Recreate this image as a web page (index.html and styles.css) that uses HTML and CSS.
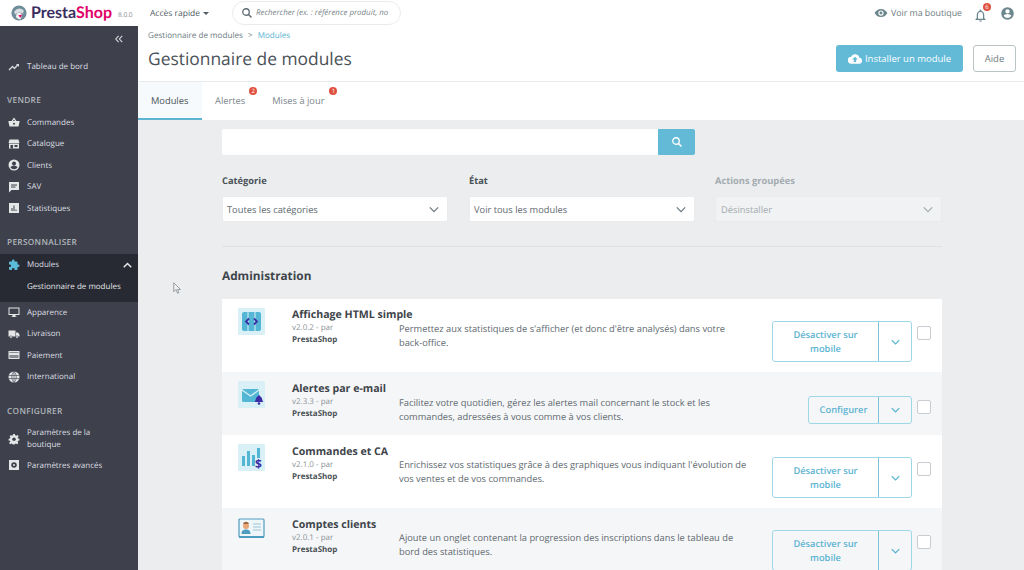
FILE: index.html
```html
<!DOCTYPE html>
<html lang="fr">
<head>
    <meta charset="UTF-8">
    <meta name="viewport" content="width=device-width, initial-scale=1.0">
    <title>Gestionnaire de modules</title>
    <link rel="stylesheet" href="styles.css">
</head>
<body>
    <header class="topbar">
        <div class="logo">
            <svg class="logo-mark" viewBox="0 0 20 20" width="16" height="16">
                <circle cx="10" cy="10" r="9.500" fill="#6f8c9b"/>
                <path d="M4 8 Q10 1 16 7 L15 11 Q10 7 5 12 Z" fill="#d9dfe3"/>
                <path d="M7 11 Q11 8 14 12 L12 18 Q8 18 6 15 Z" fill="#f4f1ec"/>
                <path d="M9 13 L14 12 L12 16 Z" fill="#df0067"/>
            </svg>
            <span class="logo-text"><span class="logo-presta">Presta</span><span class="logo-shop">Shop</span></span>
            <span class="version">8.0.0</span>
        </div>
        <div class="quick">Accès rapide <span class="caret"></span></div>
        <div class="top-search">
            <svg viewBox="0 0 24 24" width="12" height="12"><circle cx="10" cy="10" r="6.500" fill="none" stroke="#5f6b72" stroke-width="2.600"/><path d="M15 15l6 6" stroke="#5f6b72" stroke-width="2.800"/></svg>
            <span>Rechercher (ex. : référence produit, no</span>
        </div>
        <div class="top-right">
            <svg viewBox="0 0 24 24" width="14" height="14"><path d="M12 5C7 5 3 8 1 12c2 4 6 7 11 7s9-3 11-7c-2-4-6-7-11-7zm0 11.500a4.500 4.500 0 1 1 0-9 4.500 4.500 0 0 1 0 9zm0-7a2.500 2.500 0 1 0 0 5 2.500 2.500 0 0 0 0-5z" fill="#6c868e"/></svg>
            <span class="shop-link">Voir ma boutique</span>
            <div class="bell">
                <svg viewBox="0 0 24 24" width="15" height="15"><path d="M12 22a2 2 0 0 0 2-2h-4a2 2 0 0 0 2 2zm6-6v-5c0-3-1.600-5.600-4.500-6.300V4a1.500 1.500 0 0 0-3 0v.7C7.600 5.400 6 8 6 11v5l-2 2v1h16v-1zm-2 1H8v-6c0-2.500 1.500-4.500 4-4.500s4 2 4 4.500z" fill="#6c868e"/></svg>
                <span class="badge bell-badge">6</span>
            </div>
            <svg viewBox="0 0 24 24" width="15" height="15"><path d="M12 2a10 10 0 1 0 0 20 10 10 0 0 0 0-20zm0 3a3.500 3.500 0 1 1 0 7 3.500 3.500 0 0 1 0-7zm0 14.200a7.500 7.500 0 0 1-6-3.200c0-2 4-3.100 6-3.100s6 1.100 6 3.100a7.500 7.500 0 0 1-6 3.200z" fill="#6c868e"/></svg>
        </div>
    </header>

    <div class="layout">
        <nav class="sidebar">
            <div class="collapse">
                <svg viewBox="0 0 12 10" width="10" height="8"><path d="M5.500 1L2 5l3.500 4M10 1L6.500 5l3.500 4" fill="none" stroke="#d5d8dc" stroke-width="1.400"/></svg>
            </div>
            <a class="nav-item dash">
                <svg class="nav-icon" viewBox="0 0 24 24"><path d="M2 18l7-7 4 4 7-8" fill="none" stroke="#d5d8dc" stroke-width="2.600"/><path d="M16 6h6v6z" fill="#d5d8dc"/></svg>
                Tableau de bord
            </a>

            <div class="nav-title">VENDRE</div>
            <a class="nav-item">
                <svg class="nav-icon" viewBox="0 0 24 24"><path d="M1 10h22v2l-2 9H3l-2-9zM7 10l5-7 5 7h-3l-2-3-2 3z" fill="#e4e6e8"/><circle cx="12" cy="15.500" r="2" fill="#3e404b"/></svg>
                Commandes
            </a>
            <a class="nav-item">
                <svg class="nav-icon" viewBox="0 0 24 24"><path d="M3 3h18l2 7H1zM2 11h20v10H2z" fill="#e4e6e8"/><path d="M5 14h5v7H5zM13 14h6v4h-6z" fill="#3e404b"/></svg>
                Catalogue
            </a>
            <a class="nav-item">
                <svg class="nav-icon" viewBox="0 0 24 24"><path d="M12 1a11 11 0 1 0 0 22 11 11 0 0 0 0-22zm0 4a4 4 0 1 1 0 8 4 4 0 0 1 0-8zm0 15.500a8.500 8.500 0 0 1-7-3.500c0-2.200 4.500-3.400 7-3.400s7 1.200 7 3.400a8.500 8.500 0 0 1-7 3.500z" fill="#e4e6e8"/></svg>
                Clients
            </a>
            <a class="nav-item">
                <svg class="nav-icon" viewBox="0 0 24 24"><path d="M2 2h20v16H7l-5 5z" fill="#e4e6e8"/><path d="M6 7h12v2H6zM6 11h9v2H6z" fill="#3e404b"/></svg>
                SAV
            </a>
            <a class="nav-item">
                <svg class="nav-icon" viewBox="0 0 24 24"><path d="M2 2h20v20H2z" fill="#e4e6e8"/><path d="M7 12h2v6H7zM11 7h2v11h-2zM15 15h2v3h-2z" fill="#3e404b"/></svg>
                Statistiques
            </a>

            <div class="nav-title">PERSONNALISER</div>
            <div class="nav-group">
                <a class="nav-item current">
                    <svg class="nav-icon" viewBox="0 0 24 24"><path d="M20.500 11H19V7a2 2 0 0 0-2-2h-4V3.500a2.500 2.500 0 0 0-5 0V5H4a2 2 0 0 0-2 2v3.800h1.500a2.700 2.700 0 0 1 0 5.400H2V20a2 2 0 0 0 2 2h3.800v-1.500a2.700 2.700 0 0 1 5.400 0V22H17a2 2 0 0 0 2-2v-4h1.500a2.500 2.500 0 0 0 0-5z" fill="#5cbbd8"/></svg>
                    Modules
                    <svg class="nav-up" viewBox="0 0 12 8" width="9" height="6"><path d="M1 7l5-5 5 5" fill="none" stroke="#e4e6e8" stroke-width="2"/></svg>
                </a>
                <a class="nav-item sub">Gestionnaire de modules</a>
            </div>
            <a class="nav-item">
                <svg class="nav-icon" viewBox="0 0 24 24"><path d="M1 3h22v15h-8v3h2v1H7v-1h2v-3H1zm2 2v11h18V5z" fill="#e4e6e8"/></svg>
                Apparence
            </a>
            <a class="nav-item">
                <svg class="nav-icon" viewBox="0 0 24 24"><path d="M1 5h14v12H1zM16 9h4l3 4v4h-7z" fill="#e4e6e8"/><circle cx="6" cy="18" r="2.500" fill="#e4e6e8" stroke="#3e404b"/><circle cx="18" cy="18" r="2.500" fill="#e4e6e8" stroke="#3e404b"/></svg>
                Livraison
            </a>
            <a class="nav-item">
                <svg class="nav-icon" viewBox="0 0 24 24"><path d="M1 4h22v16H1z" fill="#e4e6e8"/><path d="M3 6h18v2H3zM3 12h18v6H3z" fill="#3e404b" opacity=".55"/></svg>
                Paiement
            </a>
            <a class="nav-item">
                <svg class="nav-icon" viewBox="0 0 24 24"><circle cx="12" cy="12" r="11" fill="#e4e6e8"/><path d="M1 9h22M1 15h22M12 1v22M12 1c-6 6-6 16 0 22M12 1c6 6 6 16 0 22" fill="none" stroke="#3e404b" stroke-width="1.200"/></svg>
                International
            </a>

            <div class="nav-title">CONFIGURER</div>
            <a class="nav-item tall">
                <svg class="nav-icon" viewBox="0 0 24 24"><path d="M10 1h4l.6 3 2.400 1 2.600-1.700 2.800 2.800L20 8.700l1 2.400 3 .5v4l-3 .5-1 2.300 1.700 2.600-2.800 2.800-2.600-1.700-2.400 1-.6 1.500h-4l-.6-1.500-2.400-1-2.600 1.700-2.800-2.800L4 18.400l-1-2.300-3-.5v-4l3-.5 1-2.400-1.700-2.600 2.800-2.800L7 5l2.400-1z" transform="translate(1.200 1) scale(.9)" fill="#e4e6e8"/><circle cx="12" cy="12.500" r="3.500" fill="#3e404b"/></svg>
                <span>Paramètres de la<br>boutique</span>
            </a>
            <a class="nav-item">
                <svg class="nav-icon" viewBox="0 0 24 24"><path d="M2 2h20v20H2z" fill="#e4e6e8"/><circle cx="12" cy="12" r="5.500" fill="#3e404b"/><circle cx="12" cy="12" r="2" fill="#e4e6e8"/></svg>
                Paramètres avancés
            </a>
        </nav>

        <main class="main">
            <div class="page-head">
                <div>
                    <div class="breadcrumb">Gestionnaire de modules <span class="sep">&gt;</span> <span class="crumb-active">Modules</span></div>
                    <h1>Gestionnaire de modules</h1>
                </div>
                <div class="head-actions">
                    <button class="btn-install">
                        <svg viewBox="0 0 24 24" width="14" height="14"><path d="M19.400 10A7.500 7.500 0 0 0 5.400 8 6 6 0 0 0 6 20h13a5 5 0 0 0 .4-10zM14 13v4h-4v-4H7l5-5 5 5z" fill="#fff"/></svg>
                        Installer un module
                    </button>
                    <button class="btn-help">Aide</button>
                </div>
            </div>

            <div class="tabs">
                <a class="tab active">Modules</a>
                <a class="tab">Alertes<span class="badge">2</span></a>
                <a class="tab">Mises à jour<span class="badge">1</span></a>
            </div>

            <div class="content">
                <div class="search">
                    <div class="search-input"></div>
                    <div class="search-btn">
                        <svg viewBox="0 0 24 24" width="12" height="12"><circle cx="10" cy="10" r="6.500" fill="none" stroke="#fff" stroke-width="2.600"/><path d="M15 15l6 6" stroke="#fff" stroke-width="3"/></svg>
                    </div>
                </div>

                <div class="filters">
                    <div class="filter">
                        <label>Catégorie</label>
                        <div class="select">Toutes les catégories
                            <svg viewBox="0 0 12 8" width="10" height="7"><path d="M1 1.500l5 5 5-5" fill="none" stroke="#6c7a80" stroke-width="1.500"/></svg>
                        </div>
                    </div>
                    <div class="filter">
                        <label>État</label>
                        <div class="select">Voir tous les modules
                            <svg viewBox="0 0 12 8" width="10" height="7"><path d="M1 1.500l5 5 5-5" fill="none" stroke="#6c7a80" stroke-width="1.500"/></svg>
                        </div>
                    </div>
                    <div class="filter disabled">
                        <label>Actions groupées</label>
                        <div class="select">Désinstaller
                            <svg viewBox="0 0 12 8" width="10" height="7"><path d="M1 1.500l5 5 5-5" fill="none" stroke="#a5adb1" stroke-width="1.500"/></svg>
                        </div>
                    </div>
                </div>

                <h2>Administration</h2>

                <div class="modules">
                    <div class="module">
                        <div class="mod-icon">
                            <svg viewBox="0 0 27 27" width="27" height="27"><rect width="27" height="27" rx="1" fill="#d8f0f6"/><rect x="4" y="4" width="19" height="19" rx="2" fill="#52b6d4"/><path d="M10 4v19M17 4v19" stroke="#d8f0f6"/><path d="M11 10.500L8 13.500l3 3M16 10.500l3 3-3 3" fill="none" stroke="#3b2ea5" stroke-width="1.800"/></svg>
                        </div>
                        <div class="mod-info">
                            <div class="mod-name">Affichage HTML simple</div>
                            <div class="mod-version">v2.0.2 - par</div>
                            <div class="mod-author">PrestaShop</div>
                        </div>
                        <p class="mod-desc">Permettez aux statistiques de s'afficher (et donc d'être analysés) dans votre back-office.</p>
                        <div class="mod-actions">
                            <div class="btn-group">
                                <span class="btn-main wide">Désactiver sur mobile</span>
                                <span class="btn-drop"><svg viewBox="0 0 12 8" width="9" height="6"><path d="M1 1.500l5 5 5-5" fill="none" stroke="#5cb4d2" stroke-width="1.800"/></svg></span>
                            </div>
                            <span class="check"></span>
                        </div>
                    </div>
                    <div class="module alt short">
                        <div class="mod-icon">
                            <svg viewBox="0 0 27 27" width="27" height="27"><rect width="27" height="27" rx="1" fill="#d8f0f6"/><rect x="4" y="8" width="17" height="13" rx="1.500" fill="#52b6d4"/><path d="M4 9l8.500 6L21 9" fill="none" stroke="#d8f0f6" stroke-width="1.300"/><path d="M16.500 21c1.500-1 1-5 3.500-5.700 0-1.300 2-1.300 2 0 2.500.700 2 4.700 3.500 5.700z" fill="#3b2ea5"/><circle cx="21" cy="22.500" r="1.300" fill="#3b2ea5"/></svg>
                        </div>
                        <div class="mod-info">
                            <div class="mod-name">Alertes par e-mail</div>
                            <div class="mod-version">v2.3.3 - par</div>
                            <div class="mod-author">PrestaShop</div>
                        </div>
                        <p class="mod-desc">Facilitez votre quotidien, gérez les alertes mail concernant le stock et les commandes, adressées à vous comme à vos clients.</p>
                        <div class="mod-actions">
                            <div class="btn-group">
                                <span class="btn-main">Configurer</span>
                                <span class="btn-drop"><svg viewBox="0 0 12 8" width="9" height="6"><path d="M1 1.500l5 5 5-5" fill="none" stroke="#5cb4d2" stroke-width="1.800"/></svg></span>
                            </div>
                            <span class="check"></span>
                        </div>
                    </div>
                    <div class="module">
                        <div class="mod-icon">
                            <svg viewBox="0 0 27 27" width="27" height="27" overflow="visible"><rect width="27" height="27" rx="1" fill="#d8f0f6"/><path d="M4 12h3v10H4zM9 7h3v15H9zM14 11h3v11h-3zM19 4h3v10h-3z" fill="#52b6d4"/><text x="17" y="24" font-family="Liberation Sans" font-size="12" font-weight="700" fill="#3b2ea5">$</text></svg>
                        </div>
                        <div class="mod-info">
                            <div class="mod-name">Commandes et CA</div>
                            <div class="mod-version">v2.1.0 - par</div>
                            <div class="mod-author">PrestaShop</div>
                        </div>
                        <p class="mod-desc">Enrichissez vos statistiques grâce à des graphiques vous indiquant l'évolution de vos ventes et de vos commandes.</p>
                        <div class="mod-actions">
                            <div class="btn-group">
                                <span class="btn-main wide">Désactiver sur mobile</span>
                                <span class="btn-drop"><svg viewBox="0 0 12 8" width="9" height="6"><path d="M1 1.500l5 5 5-5" fill="none" stroke="#5cb4d2" stroke-width="1.800"/></svg></span>
                            </div>
                            <span class="check"></span>
                        </div>
                    </div>
                    <div class="module alt">
                        <div class="mod-icon">
                            <svg viewBox="0 0 27 27" width="27" height="27"><rect x="1" y="2" width="25" height="18" rx="1" fill="#eef6fa" stroke="#4e9cc0" stroke-width="1.200"/><path d="M1 19h25v2H1z" fill="#4e9cc0"/><circle cx="8" cy="9" r="3" fill="#e6a678"/><path d="M3.500 17c0-3.500 2-4.500 4.500-4.500s4.500 1 4.500 4.500z" fill="#4e9cc0"/><path d="M5 7c1-3 5-3 6 0z" fill="#a0663c"/><path d="M15 7h8M15 10h8M15 13h8" stroke="#9cc4d8"/></svg>
                        </div>
                        <div class="mod-info">
                            <div class="mod-name">Comptes clients</div>
                            <div class="mod-version">v2.0.1 - par</div>
                            <div class="mod-author">PrestaShop</div>
                        </div>
                        <p class="mod-desc">Ajoute un onglet contenant la progression des inscriptions dans le tableau de bord des statistiques.</p>
                        <div class="mod-actions">
                            <div class="btn-group">
                                <span class="btn-main wide">Désactiver sur mobile</span>
                                <span class="btn-drop"><svg viewBox="0 0 12 8" width="9" height="6"><path d="M1 1.500l5 5 5-5" fill="none" stroke="#5cb4d2" stroke-width="1.800"/></svg></span>
                            </div>
                            <span class="check"></span>
                        </div>
                    </div>
                </div>
            </div>
        </main>
    </div>

    <svg class="cursor" viewBox="0 0 12 16" width="9" height="12"><path d="M1 1v12l3-3 2 5 2-1-2-4h4z" fill="#eef0f1" stroke="#7d8488" stroke-width="1"/></svg>
</body>
</html>
```

FILE: styles.css
```css
* {
    margin: 0;
    padding: 0;
    box-sizing: border-box;
    font-family: 'Open Sans', sans-serif;
}

body {
    width: 1024px;
    height: 570px;
    overflow: hidden;
    background: #ebedef;
    color: #363a41;
    position: relative;
    text-rendering: geometricPrecision;
}

/* barre du haut */
.topbar {
    height: 26px;
    background: #fff;
    display: flex;
    align-items: center;
}

.logo {
    width: 150px;
    padding-left: 11px;
    display: flex;
    align-items: center;
}

.logo-mark {
    margin-right: 4px;
    flex-shrink: 0;
}

.logo-text {
    font-family: 'Lato', sans-serif;
    font-size: 16px;
    font-weight: 700;
    line-height: 1;
}

.logo-presta {
    font-family: inherit;
    color: #3a2d5f;
}

.logo-shop {
    font-family: inherit;
    color: #df0067;
}

.version {
    font-size: 6.500px;
    color: #8a9197;
    margin-left: 6px;
    margin-top: 2px;
}

.quick {
    width: 82px;
    font-size: 8.500px;
    color: #4f5b62;
    display: flex;
    align-items: center;
    gap: 3px;
}

.caret {
    border-top: 3px solid #4f5b62;
    border-left: 3px solid transparent;
    border-right: 3px solid transparent;
}

.top-search {
    width: 169px;
    height: 24px;
    border: 1px solid #e8ecee;
    border-radius: 12px;
    display: flex;
    align-items: center;
    gap: 3px;
    padding-left: 8px;
    font-size: 7.900px;
    font-style: italic;
    color: #7c868b;
    white-space: nowrap;
}

.top-right {
    margin-left: auto;
    padding-right: 9px;
    display: flex;
    align-items: center;
}

.shop-link {
    font-size: 8.800px;
    color: #6c7a80;
    margin-left: 3px;
    margin-right: 11px;
}

.bell {
    position: relative;
    width: 15px;
    height: 15px;
    margin-right: 12px;
}

.badge {
    position: absolute;
    width: 8px;
    height: 8px;
    border-radius: 50%;
    background: #e0503e;
    color: #fff;
    font-size: 6px;
    line-height: 8px;
    text-align: center;
}

.bell-badge {
    top: -3px;
    right: -3px;
}

/* menu de gauche */
.layout {
    display: flex;
    height: 544px;
}

.sidebar {
    width: 138px;
    flex-shrink: 0;
    background: #3e404b;
    color: #dcdfe2;
}

.collapse {
    height: 28px;
    padding: 9px 14px 0 0;
    display: flex;
    justify-content: flex-end;
    align-items: flex-start;
}

.nav-item {
    display: flex;
    align-items: center;
    height: 21.500px;
    padding-left: 8px;
    font-size: 8px;
    color: #dcdfe2;
    position: relative;
}

.nav-icon {
    width: 12px;
    height: 12px;
    margin-right: 7px;
    flex-shrink: 0;
}

.dash {
    margin-top: 2px;
    margin-bottom: -1px;
}

.nav-title {
    font-size: 8.300px;
    font-weight: 600;
    letter-spacing: 0.3px;
    line-height: 14px;
    color: #b0b6bc;
    padding-left: 7px;
    margin-top: 17px;
    margin-bottom: 5px;
    height: 13px;
}

.nav-group {
    background: #282a33;
}

.nav-up {
    position: absolute;
    right: 6px;
    top: 8px;
}

.sub {
    padding-left: 27px;
    height: 26px;
    padding-bottom: 5px;
    color: #e3e5e7;
}

.tall {
    height: 32px;
    line-height: 11.500px;
    margin-top: 1px;
}

/* contenu */
.main {
    flex: 1;
    min-width: 0;
}

.page-head {
    height: 56px;
    background: #fff;
    padding: 0 8px 0 10px;
    border-bottom: 1px solid #e8eaec;
    display: flex;
    justify-content: space-between;
}

.breadcrumb {
    font-size: 8.100px;
    color: #6c7a80;
    margin-top: 4px;
    line-height: 11px;
}

.sep {
    margin: 0 3px;
}

.crumb-active {
    color: #5cb4d2;
}

h1 {
    font-size: 17.400px;
    font-weight: 400;
    color: #4a5257;
    line-height: 26px;
    margin-top: 5px;
}

.head-actions {
    display: flex;
    gap: 10px;
    margin-top: 19px;
}

.btn-install {
    width: 127px;
    height: 27px;
    border: none;
    border-radius: 3px;
    background: #62bad7;
    color: #fff;
    font-size: 9.500px;
    display: flex;
    align-items: center;
    justify-content: center;
    gap: 3px;
}

.btn-help {
    width: 43px;
    height: 27px;
    border: 1px solid #bcc3c7;
    border-radius: 3px;
    background: #fff;
    color: #6c7a80;
    font-size: 9.500px;
}

.tabs {
    height: 38px;
    background: #fff;
    display: flex;
}

.tab {
    position: relative;
    display: flex;
    align-items: center;
    height: 36px;
    font-size: 9.300px;
    color: #7b868c;
    padding: 0 13px;
}

.tab.active {
    width: 64px;
    height: 38px;
    color: #4a5257;
    background: #f6fafc;
    border-bottom: 2px solid #5cb4d2;
}

.tab:nth-child(2) .badge {
    top: 5px;
    right: 1px;
}

.tab:nth-child(3) {
    margin-left: 1px;
}

.tab:nth-child(3) .badge {
    top: 5px;
    right: 0;
}

.content {
    width: 720px;
    margin-left: 84px;
    padding-top: 9px;
}

.search {
    display: flex;
    width: 473px;
    height: 26px;
}

.search-input {
    flex: 1;
    background: #fff;
    border-radius: 2px 0 0 2px;
}

.search-btn {
    width: 37px;
    background: #62bad7;
    border-radius: 0 2px 2px 0;
    display: flex;
    align-items: center;
    justify-content: center;
}

.filters {
    display: flex;
    gap: 21px;
    margin-top: 19px;
    padding-bottom: 24px;
    border-bottom: 1px solid #dfe2e4;
}

.filter {
    width: 226px;
}

.filter.disabled {
    width: 227px;
    margin-left: -1px;
}

.filter label {
    display: block;
    font-size: 9.300px;
    font-weight: 700;
    color: #4a5257;
    line-height: 13px;
    margin-bottom: 9px;
}

.select {
    height: 26px;
    background: #fff;
    border: 1px solid #e9ebed;
    border-radius: 2px;
    padding: 0 8px 0 4px;
    font-size: 9.300px;
    color: #5e696f;
    display: flex;
    align-items: center;
    justify-content: space-between;
}

.filter.disabled label {
    color: #a4abaf;
}

.filter.disabled .select {
    background: #f0f2f3;
    color: #a4abaf;
    padding-left: 5px;
}

h2 {
    font-size: 11.800px;
    font-weight: 700;
    color: #3e444a;
    line-height: 16px;
    margin-top: 21px;
    margin-bottom: 15px;
}

.modules {
    background: #fff;
    border-radius: 3px 3px 0 0;
}

.module {
    height: 73px;
    display: flex;
    background: #fff;
    position: relative;
}

.module.alt {
    background: #f5f6f8;
}

.module.short {
    height: 63px;
}

.mod-icon {
    width: 70px;
    padding: 9px 0 0 16px;
    flex-shrink: 0;
}

.mod-info {
    width: 107px;
    flex-shrink: 0;
    padding-top: 9.500px;
}

.module:first-child .mod-info {
    padding-top: 8.500px;
}

.mod-name {
    font-size: 10.600px;
    font-weight: 700;
    color: #3e444a;
    line-height: 14px;
    white-space: nowrap;
}

.mod-version {
    font-size: 8px;
    color: #8b9398;
    line-height: 11px;
}

.mod-author {
    font-size: 8px;
    font-weight: 700;
    color: #4a5257;
    line-height: 14px;
}

.mod-desc {
    width: 349px;
    padding-top: 23px;
    font-size: 9.300px;
    line-height: 14px;
    color: #5e696f;
}

.short .mod-desc {
    padding-top: 23.500px;
}

.mod-actions {
    margin-left: auto;
    padding: 22px 11px 0 0;
    display: flex;
    align-items: flex-start;
    gap: 5px;
}

.short .mod-actions {
    padding-top: 24px;
}

.btn-group {
    display: flex;
    border: 1px solid #a0d7e8;
    border-radius: 3px;
    color: #5cb4d2;
    background: transparent;
}

.btn-main {
    display: flex;
    align-items: center;
    justify-content: center;
    width: 106px;
    font-size: 9.300px;
    font-weight: 600;
    line-height: 14px;
    text-align: center;
    height: 26px;
    border-right: 1px solid #7cc4dc;
}

.btn-main:not(.wide) {
    width: 70px;
}

.btn-main.wide {
    height: 39px;
    padding: 0 18px;
}

.btn-drop {
    width: 32px;
    display: flex;
    align-items: center;
    justify-content: center;
}

.check {
    width: 14px;
    height: 14px;
    margin-top: 5px;
    border: 1.500px solid #c8ccd0;
    border-radius: 2px;
    background: #fff;
}

.short .check {
    margin-top: 4px;
}

/* curseur de la capture */
.cursor {
    position: absolute;
    left: 173px;
    top: 282px;
}
```
